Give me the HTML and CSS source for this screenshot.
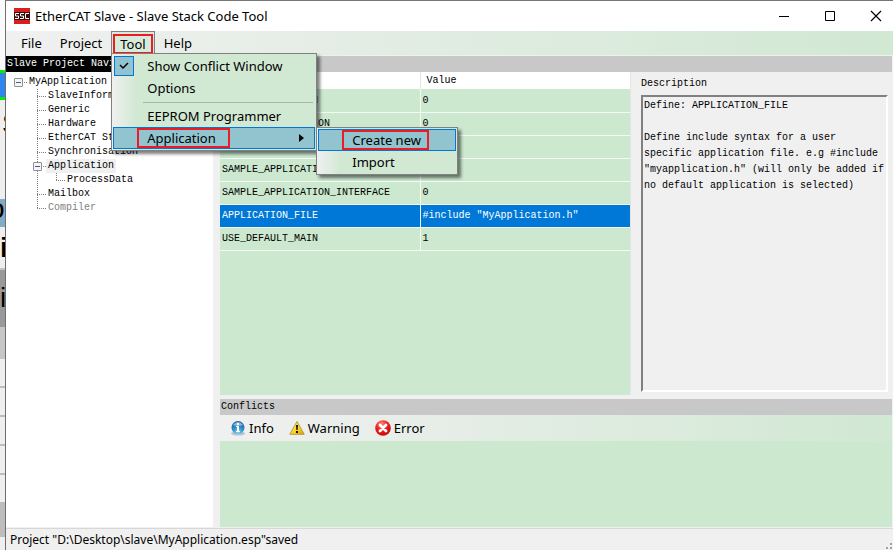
FILE: index.html
```html
<!DOCTYPE html>
<html lang="en">
<head>
    <meta charset="UTF-8">
    <meta name="viewport" content="width=device-width, initial-scale=1.0">
    <title>EtherCAT Slave - Slave Stack Code Tool</title>
    <link rel="stylesheet" href="styles.css">
</head>
<body>
    <div class="backdrop" aria-hidden="true">
        <div class="strip-top"></div>
        <div class="strip-tab"></div>
        <div class="strip-letter">S</div>
        <div class="strip-selected">o</div>
        <div class="strip-title">i</div>
        <div class="strip-dark">i</div>
        <div class="strip-head"></div>
        <div class="strip-row"></div>
        <div class="strip-row"></div>
        <div class="strip-row"></div>
        <div class="strip-row"></div>
        <div class="strip-row"></div>
        <div class="strip-foot"></div>
    </div>

    <div class="window">
        <header class="titlebar">
            <svg class="app-icon" width="16" height="16" viewBox="0 0 16 16">
                <rect width="16" height="16" fill="#d81e1e"/>
                <rect y="4" width="16" height="8" fill="#3a0d0d"/>
                <path d="M5 5.5H1.5V8H4.5V10.5H1M10 5.5H6.5V8H9.5V10.5H6M15 5.5H11.5V10.5H15" fill="none" stroke="#fff"/>
            </svg>
            <h1>EtherCAT Slave - Slave Stack Code Tool</h1>
            <div class="window-buttons">
                <button type="button" aria-label="Minimize">
                    <svg width="12" height="12" viewBox="0 0 12 12"><path d="M1 6.5h10" stroke="#000"/></svg>
                </button>
                <button type="button" aria-label="Maximize">
                    <svg width="12" height="12" viewBox="0 0 12 12"><path d="M1.5 1.5h9v9h-9z" fill="none" stroke="#000"/></svg>
                </button>
                <button type="button" aria-label="Close">
                    <svg width="12" height="12" viewBox="0 0 12 12"><path d="M1 1l10 10M11 1L1 11" stroke="#000" stroke-width="1.2"/></svg>
                </button>
            </div>
        </header>

        <nav class="menubar">
            <button type="button" class="menu-button">File</button>
            <button type="button" class="menu-button">Project</button>
            <div class="menu-group">
                <button type="button" class="menu-button open"><span class="mark">Tool</span></button>
                <div class="dropdown tool-menu">
                    <label class="menu-item" for="showConflicts">
                        <input type="checkbox" id="showConflicts" checked>
                        <span>Show Conflict Window</span>
                    </label>
                    <button type="button" class="menu-item">Options</button>
                    <hr>
                    <button type="button" class="menu-item">EEPROM Programmer</button>
                    <div class="submenu-group">
                        <button type="button" class="menu-item active">
                            <span class="mark">Application</span>
                            <svg class="arrow" width="5" height="8" viewBox="0 0 5 8"><path d="M0 0l5 4-5 4z"/></svg>
                        </button>
                        <div class="dropdown application-menu">
                            <button type="button" class="menu-item active"><span class="mark">Create new</span></button>
                            <button type="button" class="menu-item">Import</button>
                        </div>
                    </div>
                </div>
            </div>
            <button type="button" class="menu-button">Help</button>
        </nav>

        <main class="workspace">
            <aside class="navigator">
                <h2 class="panel-title dark">Slave Project Navigator</h2>
                <ul class="tree">
                    <li>
                        <div class="node root"><button type="button" class="toggle" aria-label="Collapse MyApplication"></button><span>MyApplication</span></div>
                        <ul>
                            <li><div class="node"><span>SlaveInformation</span></div></li>
                            <li><div class="node"><span>Generic</span></div></li>
                            <li><div class="node"><span>Hardware</span></div></li>
                            <li><div class="node"><span>EtherCAT State Machine</span></div></li>
                            <li><div class="node"><span>Synchronisation</span></div></li>
                            <li>
                                <div class="node parent"><button type="button" class="toggle" aria-label="Collapse Application"></button><span class="current">Application</span></div>
                                <ul>
                                    <li><div class="node"><span>ProcessData</span></div></li>
                                </ul>
                            </li>
                            <li><div class="node"><span>Mailbox</span></div></li>
                            <li><div class="node disabled"><span>Compiler</span></div></li>
                        </ul>
                    </li>
                </ul>
            </aside>

            <div class="content">
                <section class="settings">
                    <div class="panel-title"></div>
                    <div class="settings-body">
                        <div class="grid">
                            <table>
                                <thead>
                                    <tr><th>Name</th><th>Value</th></tr>
                                </thead>
                                <tbody>
                                    <tr><td>TEST_APPLICATION</td><td>0</td></tr>
                                    <tr><td>EL9800_APPLICATION</td><td>0</td></tr>
                                    <tr><td>CiA402_DEVICE</td><td>0</td></tr>
                                    <tr><td>SAMPLE_APPLICATION</td><td>0</td></tr>
                                    <tr><td>SAMPLE_APPLICATION_INTERFACE</td><td>0</td></tr>
                                    <tr class="selected"><td>APPLICATION_FILE</td><td>#include "MyApplication.h"</td></tr>
                                    <tr><td>USE_DEFAULT_MAIN</td><td>1</td></tr>
                                </tbody>
                            </table>
                        </div>
                        <div class="description">
                            <label for="description">Description</label>
                            <textarea id="description" readonly>Define: APPLICATION_FILE

Define include syntax for a user specific application file. e.g #include "myapplication.h" (will only be added if no default application is selected)</textarea>
                        </div>
                    </div>
                </section>

                <section class="conflicts">
                    <h2 class="panel-title">Conflicts</h2>
                    <div class="toolbar">
                        <button type="button">
                            <svg width="16" height="16" viewBox="0 0 16 16">
                                <defs>
                                    <radialGradient id="blue" cx="50%" cy="85%" r="80%"><stop offset="0" stop-color="#7fdcf8"/><stop offset="0.5" stop-color="#2c8fca"/><stop offset="1" stop-color="#2b5f9c"/></radialGradient>
                                </defs>
                                <ellipse cx="8" cy="13.5" rx="7" ry="2" fill="#b9c3c9"/>
                                <circle cx="8" cy="7.5" r="6.5" fill="url(#blue)"/>
                                <path d="M3 5q5-6 10 0q-5 2-10 0z" fill="#a8d4ee" opacity="0.7"/>
                                <path d="M7 3h2v2H7zM6 6h3v5h1v1H6v-1h1V7H6z" fill="#fff"/>
                            </svg>
                            Info
                        </button>
                        <button type="button">
                            <svg width="16" height="16" viewBox="0 0 16 16">
                                <defs>
                                    <linearGradient id="yellow" x2="1" y2="1"><stop offset="0" stop-color="#fff3a0"/><stop offset="0.6" stop-color="#f8d21c"/><stop offset="1" stop-color="#d59a00"/></linearGradient>
                                </defs>
                                <path d="M8 1.5L15.2 14.3H0.8z" fill="url(#yellow)" stroke="#b99a45" stroke-linejoin="round"/>
                                <path d="M7 5h2l-.4 5H7.4zM7 11h2v2H7z" fill="#111"/>
                            </svg>
                            Warning
                        </button>
                        <button type="button">
                            <svg width="16" height="16" viewBox="0 0 16 16">
                                <defs>
                                    <radialGradient id="red" cx="40%" cy="25%" r="75%"><stop offset="0" stop-color="#ff8a80"/><stop offset="0.5" stop-color="#ee2020"/><stop offset="1" stop-color="#c90808"/></radialGradient>
                                </defs>
                                <circle cx="8" cy="8" r="7.8" fill="url(#red)"/>
                                <path d="M5 5l6 6M11 5l-6 6" stroke="#fff" stroke-width="2.8" stroke-linecap="round"/>
                            </svg>
                            Error
                        </button>
                    </div>
                    <div class="conflict-list"></div>
                </section>
            </div>
        </main>

        <footer class="statusbar">
            <span>Project "D:\Desktop\slave\MyApplication.esp"saved</span>
            <svg class="grip" width="8" height="8" viewBox="0 0 8 8"><path d="M5 1h2v2H5zM1 5h2v2H1zM5 5h2v2H5z" fill="#a0a0a0"/></svg>
        </footer>
    </div>
</body>
</html>
```

FILE: styles.css
```css
* {
    box-sizing: border-box;
}
body {
    margin: 0;
    display: flex;
    height: 100vh;
    overflow: hidden;
    background: #f0f0f0;
    color: #000;
    font-family: "Noto Sans", "Open Sans", sans-serif;
    font-size: 13px;
}
button {
    border: 0;
    padding: 0;
    background: none;
    color: inherit;
    font: inherit;
}
h1, h2, ul {
    margin: 0;
    padding: 0;
    font-weight: normal;
    list-style: none;
}

/* slice of the document behind the window */
.backdrop {
    display: flex;
    flex-direction: column;
    width: 5px;
    flex-shrink: 0;
    overflow: hidden;
    background: #efefef;
    font-family: "Liberation Sans", sans-serif;
    font-size: 28px;
}
.backdrop div {
    flex-shrink: 0;
    overflow: hidden;
}
.strip-top {
    height: 70px;
    background: #fafafa;
}
.strip-tab {
    height: 30px;
    background: #2f86ee;
    border: solid #00f000;
    border-width: 3px 0;
}
.strip-letter {
    height: 99px;
    padding: 8px 0 0 2px;
}
.strip-selected {
    height: 28px;
    line-height: 20px;
    text-indent: -11px;
    background: #82abc6;
}
.strip-title {
    height: 43px;
    line-height: 42px;
    font-weight: bold;
    border-bottom: 2px solid #c4c4c4;
}
.strip-dark {
    height: 57px;
    line-height: 56px;
    background: #999;
}
.strip-head {
    height: 32px;
    background: #c6c6c6;
}
.strip-row {
    height: 29px;
    border-bottom: 2px solid #bdbdbd;
}
.strip-foot {
    height: 33px;
    background: #bdbdbd;
}

.window {
    display: flex;
    flex-direction: column;
    flex: 1;
    min-width: 0;
    border-top: 1px solid #767676;
    border-left: 1px solid #6e6e6e;
}

/* title bar */
.titlebar {
    display: flex;
    align-items: center;
    height: 30px;
    flex-shrink: 0;
    padding-left: 8px;
    background: #fff;
}
.titlebar h1 {
    flex: 1;
    margin-left: 5px;
    font-size: 13px;
}
.window-buttons {
    display: flex;
    margin-right: -6px;
}
.window-buttons button {
    display: flex;
    align-items: center;
    justify-content: center;
    width: 46px;
    height: 30px;
}

/* menus */
.menubar {
    display: flex;
    height: 24px;
    flex-shrink: 0;
    padding-left: 6px;
    background: linear-gradient(to right, #f0f0f0, #d1e8d3);
}
.menu-button {
    height: 24px;
    padding: 0 9px;
}
.menu-button.open {
    padding: 0 1px;
    border: 1px solid #808080;
    border-bottom: 0;
    background: #d8ebda;
}
.menu-button.open .mark {
    padding: 0 5px;
}
.mark {
    display: block;
    border: 2px solid #ed1c24;
    line-height: 16px;
}
.menu-group, .submenu-group {
    position: relative;
}
.dropdown {
    position: absolute;
    z-index: 1;
    padding: 1px;
    border: 1px solid #808080;
    background: linear-gradient(to right, #f0f0f0, #d1e8d3 24px);
    box-shadow: 3px 3px 3px rgba(0, 0, 0, 0.5);
}
.tool-menu {
    top: 22px;
    left: 0;
    width: 206px;
}
.application-menu {
    top: 0;
    left: 203px;
    width: 142px;
}
.menu-item {
    display: flex;
    align-items: center;
    width: 100%;
    height: 22px;
    padding: 0 10px 0 34px;
    text-align: left;
    white-space: nowrap;
}
.menu-item.active {
    border: 1px solid #0078d7;
    background: #91c4cf;
    padding-left: 23px;
}
.menu-item .mark {
    padding: 0 12px 0 8px;
}
.application-menu .mark {
    padding-right: 6px;
}
.menu-item input {
    appearance: none;
    width: 20px;
    height: 20px;
    margin: 0 13px 0 -33px;
    border: 1px solid #0078d7;
    background: #91c4cf url("data:image/svg+xml,%3Csvg xmlns='http://www.w3.org/2000/svg' viewBox='0 0 18 18'%3E%3Cpath d='M5 8l3 3 5-5' fill='none' stroke='black' stroke-width='1.5'/%3E%3C/svg%3E");
}
.arrow {
    margin-left: auto;
}
.tool-menu hr {
    height: 1px;
    margin: 3px 2px 2px 30px;
    border: 0;
    background: #a5b5a7;
}

/* panels */
.workspace {
    display: flex;
    flex: 1;
    gap: 7px;
    min-height: 0;
    padding: 1px 1px 0 0;
    font-family: "Liberation Mono", monospace;
    font-size: 10px;
}
.panel-title {
    height: 16px;
    flex-shrink: 0;
    padding-left: 1px;
    background: #c8c8c8;
    font-size: 10px;
    line-height: 16px;
}
.panel-title.dark {
    background: #000;
    color: #fff;
}
.navigator {
    display: flex;
    flex-direction: column;
    width: 207px;
    flex-shrink: 0;
    background: #fff;
}

/* project tree */
.tree {
    padding: 3px 0 0 8px;
    line-height: 14px;
    white-space: nowrap;
}
.tree ul {
    margin-left: 23px;
}
.tree ul ul {
    margin-left: 19px;
}
.tree ul li {
    background: repeating-linear-gradient(to bottom, #808080 0 1px, transparent 1px 2px) 0 0 / 1px 100% no-repeat;
}
.tree ul li:last-child {
    background-size: 1px 8px;
}
.node {
    display: flex;
    align-items: center;
    height: 14px;
    padding-left: 11px;
    background: repeating-linear-gradient(to right, #808080 0 1px, transparent 1px 2px) 0 7px / 9px 1px no-repeat;
}
.node.root {
    padding-left: 0;
    background-size: 13px 1px;
}
.node.root span {
    margin-left: 6px;
}
.node.parent {
    margin-left: -4px;
    padding-left: 0;
    background-size: 13px 1px;
}
.node.parent span {
    margin-left: 4px;
    padding: 0 2px;
}
.node .current {
    background: #f0f0f0;
}
.node.disabled {
    color: #808080;
}
.toggle {
    width: 9px;
    height: 9px;
    border: 1px solid #919191;
    border-radius: 1px;
    background: linear-gradient(#3b5ba5, #3b5ba5) center / 5px 1px no-repeat #f4f4f4;
}

.content {
    display: flex;
    flex-direction: column;
    flex: 1;
    gap: 4px;
    min-width: 0;
}
.settings {
    display: flex;
    flex-direction: column;
    flex: 1;
    min-height: 0;
}
.settings-body {
    display: flex;
    flex: 1;
    gap: 10px;
    min-height: 0;
}
.grid {
    flex: 1;
    border-right: 1px solid #e4e4e4;
    background: #cce8cf;
}
.grid table {
    width: 100%;
    border-collapse: collapse;
    table-layout: fixed;
}
.grid th {
    height: 17px;
    padding: 0 6px;
    background: #fff;
    font-weight: normal;
    text-align: left;
}
.grid th:first-child {
    width: 200px;
    border-right: 1px solid #e4e4e4;
}
.grid td {
    height: 23px;
    padding: 0 2px;
    border-bottom: 1px solid #f4faf5;
}
.grid td:first-child {
    border-right: 1px solid #f4faf5;
}
.grid .selected {
    background: #0078d7;
    color: #fff;
}
.description {
    display: flex;
    flex-direction: column;
    width: 251px;
    flex-shrink: 0;
    padding: 5px 4px 3px 0;
}
.description label {
    padding-bottom: 4px;
    line-height: 14px;
}
.description textarea {
    flex: 1;
    margin: 0;
    padding: 1px 0 0 1px;
    border: 2px solid #808080;
    border-right-color: #fff;
    border-bottom-color: #fff;
    outline: 0;
    background: #f0f0f0;
    font: 10px/16px "Liberation Mono", monospace;
    overflow: hidden;
    resize: none;
}

/* conflicts */
.toolbar {
    display: flex;
    gap: 15px;
    height: 26px;
    padding-left: 10px;
    background: linear-gradient(to right, #f0f0f0, #d1e8d3);
    font-family: "Noto Sans", "Open Sans", sans-serif;
    font-size: 13px;
}
.toolbar button {
    display: flex;
    align-items: center;
    gap: 3px;
}
.conflict-list {
    height: 86px;
    background: #cce8cf;
}

.statusbar {
    display: flex;
    align-items: center;
    height: 22px;
    flex-shrink: 0;
    margin-top: 1px;
    padding-left: 4px;
    border-top: 1px solid #d7d7d7;
    font-size: 12px;
}
.grip {
    align-self: flex-end;
    margin-left: auto;
}
```
